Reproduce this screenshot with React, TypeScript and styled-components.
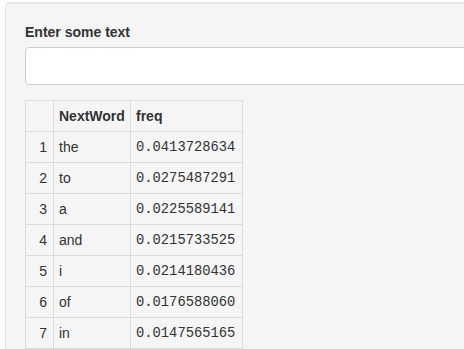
import styled, { createGlobalStyle } from 'styled-components';

const GlobalStyle = createGlobalStyle`
  html, body {
    margin: 0;
    padding: 0;
    overflow: hidden;
    background: #ffffff;
    font-family: "Liberation Sans", Arial, sans-serif;
    color: #333333;
  }
`;

const rows: [string, string][] = [
  ['the', '0.0413728634'],
  ['to', '0.0275487291'],
  ['a', '0.0225589141'],
  ['and', '0.0215733525'],
  ['i', '0.0214180436'],
  ['of', '0.0176588060'],
  ['in', '0.0147565165'],
];

const Page = styled.div`
  padding: 2px 0 0 5px;
  width: 520px;
`;

const Well = styled.div`
  background: #f5f5f5;
  border: 1px solid #e3e3e3;
  border-radius: 4px;
  padding: 19px;
  min-height: 500px;
  box-shadow: inset 0 1px 1px rgba(0, 0, 0, 0.05);
`;

const Label = styled.label`
  display: block;
  font-size: 14px;
  font-weight: bold;
  line-height: 20px;
  margin-bottom: 5px;
  color: #333;
`;

const TextInput = styled.input`
  display: block;
  box-sizing: border-box;
  width: 100%;
  height: 38px;
  margin: 0 0 15px;
  padding: 6px 12px;
  border: 1px solid #cccccc;
  border-radius: 4px;
  background: #ffffff;
  font-size: 14px;
  font-family: inherit;
  outline: none;
`;

const Table = styled.table`
  border-collapse: collapse;
  table-layout: fixed;
  width: 217px;
`;

const Cell = styled.td<{ $right?: boolean; $mono?: boolean; $head?: boolean }>`
  border: 1px solid #dddddd;
  height: 31px;
  padding: 0 6px 0 5px;
  box-sizing: border-box;
  text-align: ${(p) => (p.$right ? 'right' : 'left')};
  font-family: ${(p) =>
    p.$mono ? '"Liberation Mono", "Courier New", monospace' : 'inherit'};
  font-size: ${(p) => (p.$mono ? '13.8px' : '14px')};
  font-weight: ${(p) => (p.$head ? 'bold' : 'normal')};
  color: #333;
  vertical-align: middle;
  white-space: nowrap;
`;

const App = (): JSX.Element => {
  return (
    <Page>
      <GlobalStyle />
      <Well>
        <Label htmlFor="text">Enter some text</Label>
        <TextInput id="text" type="text" />
        <Table>
          <colgroup>
            <col style={{ width: 28 }} />
            <col style={{ width: 77 }} />
            <col style={{ width: 112 }} />
          </colgroup>
          <thead>
            <tr>
              <Cell as="th" $head></Cell>
              <Cell as="th" $head>
                NextWord
              </Cell>
              <Cell as="th" $head>
                freq
              </Cell>
            </tr>
          </thead>
          <tbody>
            {rows.map((row, idx) => (
              <tr key={idx}>
                <Cell $right>{idx + 1}</Cell>
                <Cell>{row[0]}</Cell>
                <Cell $mono>{row[1]}</Cell>
              </tr>
            ))}
          </tbody>
        </Table>
      </Well>
    </Page>
  );
};

export default App;
